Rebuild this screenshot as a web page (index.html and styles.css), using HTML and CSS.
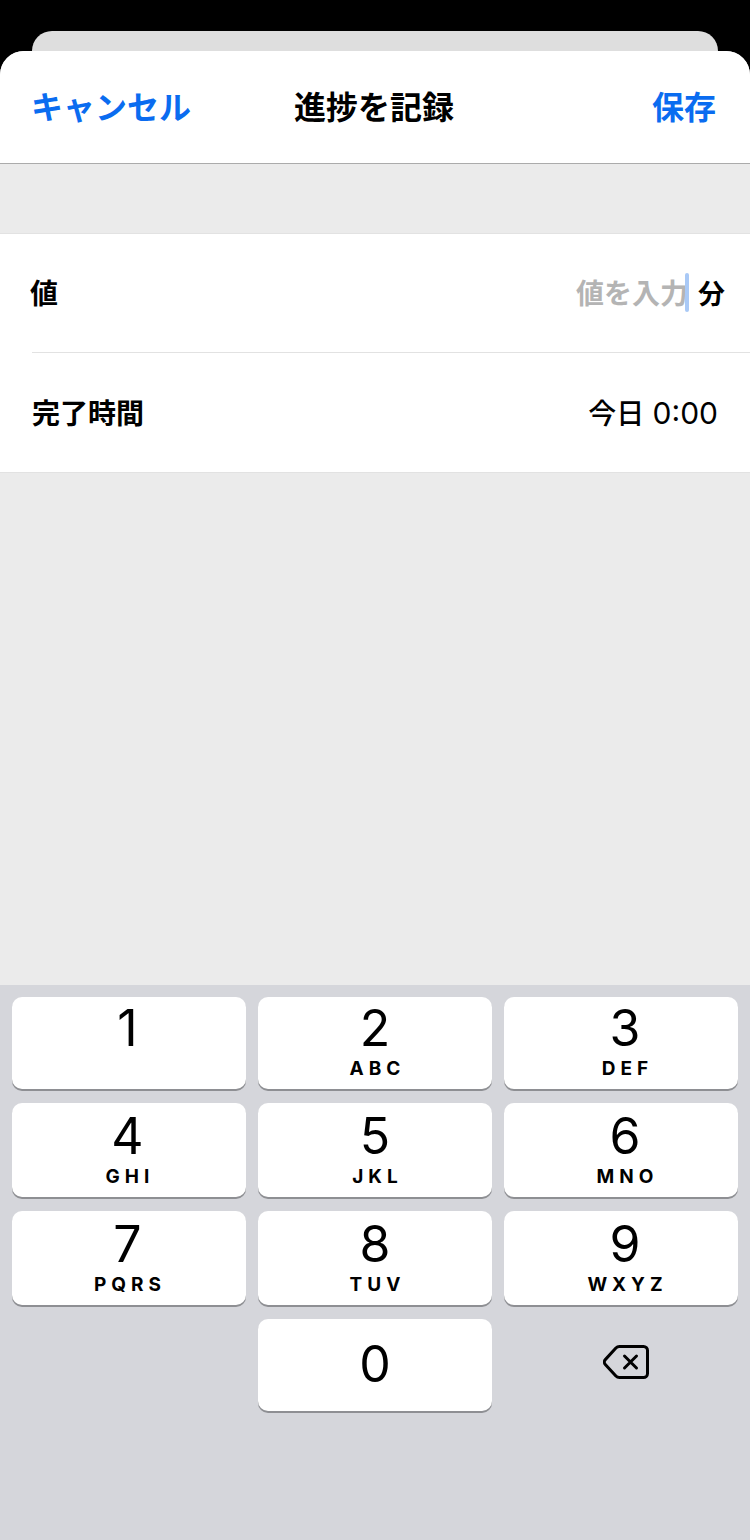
FILE: index.html
```html
<!DOCTYPE html>
<html lang="ja">
<head>
    <meta charset="UTF-8">
    <title>進捗を記録</title>
    <link rel="stylesheet" href="styles.css">
</head>
<body>
<div class="backdrop">
    <div class="back-card"></div>
</div>

<div class="sheet">
    <!-- Navigation bar -->
    <header class="nav-bar">
        <span class="nav-action">キャンセル</span>
        <span class="nav-title">進捗を記録</span>
        <span class="nav-action nav-save">保存</span>
    </header>

    <!-- Form -->
    <div class="form-area">
        <section class="form-group">
            <div class="row row-value">
                <span class="row-label">値</span>
                <span class="value-input">
                    <span class="placeholder">値を入力</span>
                    <span class="caret"></span>
                    <span class="unit">分</span>
                </span>
            </div>
            <div class="row row-time">
                <span class="row-label">完了時間</span>
                <span class="time-value">今日 <span class="time-digits">0:00</span></span>
            </div>
        </section>
    </div>

    <!-- Number pad -->
    <div class="keyboard">
        <div class="key key-left"><span class="digit">1</span></div>
        <div class="key"><span class="digit">2</span><span class="letters">ABC</span></div>
        <div class="key key-right"><span class="digit">3</span><span class="letters">DEF</span></div>
        <div class="key key-tall key-left"><span class="digit">4</span><span class="letters">GHI</span></div>
        <div class="key key-tall"><span class="digit">5</span><span class="letters">JKL</span></div>
        <div class="key key-tall key-right"><span class="digit">6</span><span class="letters">MNO</span></div>
        <div class="key key-tall key-left"><span class="digit">7</span><span class="letters">PQRS</span></div>
        <div class="key key-tall"><span class="digit">8</span><span class="letters">TUV</span></div>
        <div class="key key-tall key-right"><span class="digit">9</span><span class="letters">WXYZ</span></div>
        <div class="key-blank"></div>
        <div class="key key-zero"><span class="digit">0</span></div>
        <div class="key-blank key-delete">
            <svg width="46" height="34" viewBox="0 0 46 34" fill="none" stroke="#000" stroke-width="3" stroke-linejoin="round" stroke-linecap="round">
                <path d="M16.500 1.500h24a4 4 0 0 1 4 4v23a4 4 0 0 1-4 4h-24a5 5 0 0 1-3.600-1.500l-10.600-11.600a3.500 3.500 0 0 1 0-4.800l10.600-11.600a5 5 0 0 1 3.600-1.500z"/>
                <path d="M21.500 11l12 12M33.500 11l-12 12"/>
            </svg>
        </div>
    </div>
</div>
</body>
</html>
```

FILE: styles.css
```css
/* iOS style modal sheet with number pad */
body {
  margin: 0;
  width: 750px;
  height: 1540px;
  overflow: hidden;
  background-color: #000;
  font-family: "Noto Sans CJK JP", "Inter", sans-serif;
  color: #000;
}
.backdrop {
  height: 51px;
  padding: 31px 32px 0;
  box-sizing: border-box;
}
.back-card {
  height: 20px;
  background-color: #dedede;
  border-radius: 20px 20px 0 0;
}
.sheet {
  height: 1489px;
  display: flex;
  flex-direction: column;
  background-color: #ebebeb;
  border-radius: 24px 24px 0 0;
  overflow: hidden;
}

/* Navigation bar */
.nav-bar {
  height: 113px;
  box-sizing: border-box;
  display: grid;
  grid-template-columns: 1fr auto 1fr;
  align-items: center;
  padding: 0 34px 4px 32px;
  background-color: #fff;
  border-bottom: 1px solid #ababab;
}
.nav-action {
  margin-left: -1px;
  font-size: 32px;
  font-weight: 700;
  color: #0a6cf0;
}
.nav-save {
  text-align: right;
}
.nav-title {
  font-size: 32px;
  font-weight: 700;
}

/* Form rows */
.form-area {
  flex: 1;
  padding-top: 69px;
}
.form-group {
  background-color: #fff;
  border-top: 1px solid #e2e2e2;
  border-bottom: 1px solid #e2e2e2;
}
.row {
  display: flex;
  justify-content: space-between;
  align-items: center;
  box-sizing: border-box;
}
.row-value {
  height: 118px;
  padding: 0 25px 2px 30px;
}
.row-time {
  height: 120px;
  margin-left: 32px;
  padding: 0 32px 2px 0;
  border-top: 1px solid #e2e2e2;
}
.row-label {
  font-size: 28px;
  font-weight: 700;
}
.value-input {
  display: flex;
  align-items: center;
}
.placeholder {
  font-size: 28px;
  font-weight: 700;
  color: #b4b4b4;
}
.caret {
  width: 4px;
  height: 39px;
  margin-left: -3px;
  background-color: #a9c9f6;
  border-radius: 2px;
}
.unit {
  margin-left: 9px;
  font-size: 27px;
  font-weight: 700;
}
.time-value {
  font-size: 28px;
  font-weight: 500;
}
.time-digits {
  margin-left: 2px;
  font-family: "Inter", sans-serif;
  font-size: 30px;
  font-weight: 400;
}

/* Keyboard */
.keyboard {
  height: 555px;
  box-sizing: border-box;
  display: grid;
  grid-template-columns: repeat(3, 234px);
  grid-template-rows: 92px 94px 94px 92px;
  column-gap: 12px;
  row-gap: 14px;
  align-content: start;
  padding: 12px 12px 0;
  background-color: #d5d6db;
}
.key {
  display: flex;
  flex-direction: column;
  align-items: center;
  background-color: #fff;
  border-radius: 10px;
  box-shadow: 0 2px 0 #8e8f93;
  font-family: "Inter", sans-serif;
}
.key-left {
  padding-right: 3px;
}
.key-right {
  padding-left: 8px;
}
.digit {
  margin-top: 3px;
  font-size: 50px;
  font-weight: 400;
  line-height: 56px;
}
.key-tall .digit {
  margin-top: 5px;
}
.key-zero .digit {
  margin-top: 17px;
}
.letters {
  margin-top: 1px;
  margin-right: -5px;
  font-size: 19px;
  font-weight: 700;
  line-height: 24px;
  letter-spacing: 5px;
}
.key-delete {
  display: flex;
  justify-content: center;
  align-items: center;
  padding: 0 0 6px 10px;
}
```
